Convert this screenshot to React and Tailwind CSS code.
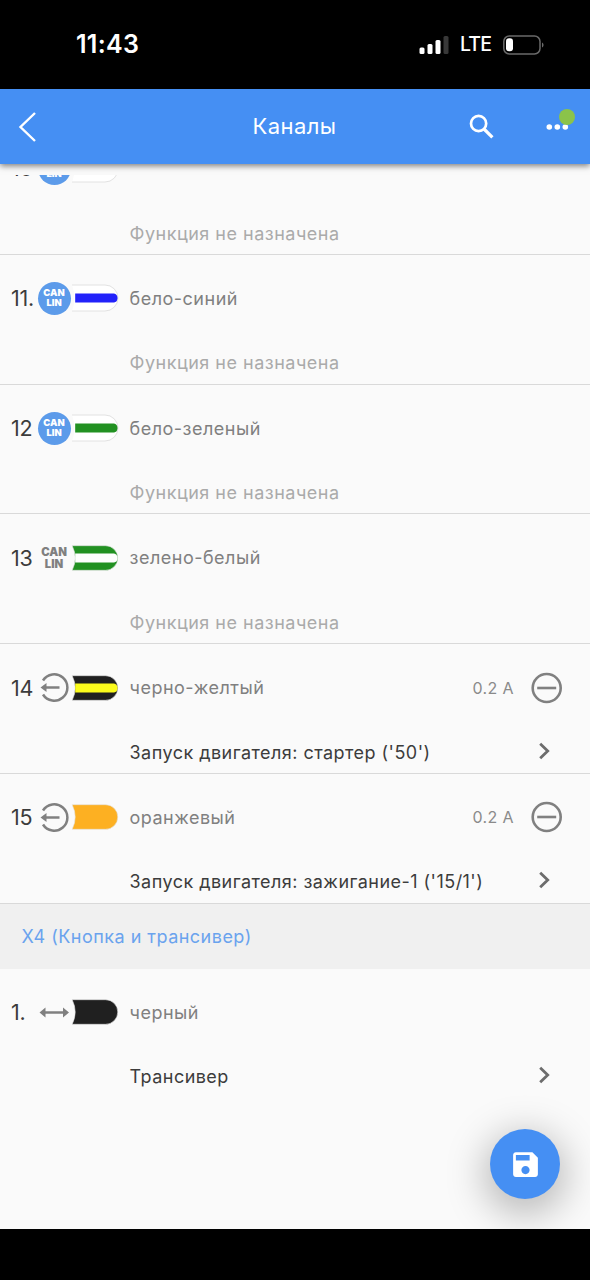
import clsx from 'clsx';

const unassigned = 'Функция не назначена';

const channels = [
    { num: '10', icon: 'can', base: '#ffffff', stripe: null, color: '', func: null },
    { num: '11.', icon: 'can', base: '#ffffff', stripe: '#2222fa', color: 'бело-синий', func: null },
    { num: '12', icon: 'can', base: '#ffffff', stripe: '#229122', color: 'бело-зеленый', func: null },
    { num: '13', icon: 'can-off', base: '#229122', stripe: '#ffffff', color: 'зелено-белый', func: null },
    { num: '14', icon: 'output', base: '#202020', stripe: '#fbfb1c', color: 'черно-желтый', current: '0.2 A', func: "Запуск двигателя: стартер ('50')" },
    { num: '15', icon: 'output', base: '#fdb022', stripe: null, color: 'оранжевый', current: '0.2 A', func: "Запуск двигателя: зажигание-1 ('15/1')" },
];

const transceiver = [
    { num: '1.', icon: 'both', base: '#202020', stripe: null, color: 'черный', func: 'Трансивер' },
];

function StatusBar() {
    return (
        <div className="flex h-[89px] shrink-0 items-center justify-between bg-black pl-[76px] pr-[46px] text-white">
            <span className="text-[25px] font-semibold leading-none tracking-[0.3px]">11:43</span>
            <div className="flex items-center">
                <svg width="30" height="18" viewBox="0 0 30 18" fill="#fff">
                    <rect x="0.5" y="11.500" width="5" height="6.500" rx="1.5" />
                    <rect x="8.5" y="8" width="5" height="10" rx="1.5" />
                    <rect x="16.5" y="4" width="5" height="14" rx="1.5" />
                    <rect x="24.5" y="0" width="5" height="18" rx="1.5" fill="#383838" />
                </svg>
                <span className="ml-[11px] text-[19.500px] font-medium leading-none tracking-[-0.9px]">LTE</span>
                <svg className="ml-[12px] -mr-px" width="42" height="20" viewBox="0 0 42 20" fill="none">
                    <rect x="0.8" y="1" width="36.200" height="18" rx="5.5" stroke="#6a6a6a" strokeWidth="1.5" />
                    <rect x="3" y="3.3" width="7" height="13" rx="3" fill="#fff" />
                    <path d="M39 7.5c2 .8 2 4.2 0 5z" fill="#6a6a6a" />
                </svg>
            </div>
        </div>
    );
}

function Header() {
    return (
        <header className="z-10 grid h-[75px] shrink-0 grid-cols-[1fr_auto_1fr] items-center bg-[#458ff3] pl-[18px] pr-[19px] text-white shadow-[0_2px_6px_rgba(0,0,0,0.5)]">
            <svg width="18" height="30" viewBox="0 0 18 30" fill="none" stroke="#fff" strokeWidth="2.4">
                <path d="M17 1 2.500 15 17 29" />
            </svg>
            <h1 className="-mt-px text-[22px] leading-none tracking-[0.4px]">Каналы</h1>
            <div className="-mr-[5px] flex items-center justify-end gap-[52px]">
                <svg width="25" height="25" viewBox="0 0 25 25" fill="none" stroke="#fff">
                    <circle cx="9.600" cy="9.500" r="7.600" strokeWidth="2.700" />
                    <path d="m15 15 8.400 8.400" strokeWidth="3.200" />
                </svg>
                <div className="relative h-6 w-[30px]">
                    <svg width="24" height="24" viewBox="0 0 24 24" fill="#fff">
                        <circle cx="3.300" cy="12" r="2.800" />
                        <circle cx="11.300" cy="12" r="2.800" />
                        <circle cx="19.300" cy="12" r="2.800" />
                    </svg>
                    <span className="absolute left-[13px] top-[-6px] size-4 rounded-full bg-[#8bc34a]" />
                </div>
            </div>
        </header>
    );
}

function ChannelIcon({ type }) {
    if (type === 'can' || type === 'can-off') {
        return (
            <div
                className={clsx(
                    'flex size-[33px] shrink-0 flex-col items-center justify-center rounded-full font-black',
                    type === 'can' ? 'bg-[#5c9bea] text-[9.400px] leading-[10.500px] text-white' : 'text-[11.300px] leading-[12px] text-[#808080]'
                )}
            >
                <span>CAN</span>
                <span>LIN</span>
            </div>
        );
    }

    return (
        <svg className="shrink-0" width="33" height="33" viewBox="0 0 33 33" fill="none" stroke="#808080" strokeWidth="2.500">
            {type === 'output' ? (
                <>
                    <path d="M5 9.500a13.200 13.200 0 1 1 0 14" />
                    <path d="M8 16.500h13.500" />
                    <path d="M2.500 16.500 8.500 11.900v9.200z" fill="#808080" stroke="none" />
                </>
            ) : (
                <>
                    <path d="M6 16.500h20" />
                    <path d="M1.500 16.500 7.500 11.500v10zM31 16.500 25 11.500v10z" fill="#808080" stroke="none" />
                </>
            )}
        </svg>
    );
}

function Wire({ base, stripe }) {
    const light = base === '#ffffff';

    return (
        <svg className="shrink-0" width="48" height="28" viewBox="0 0 48 28" fill="none">
            {light ? (
                <>
                    <path d="M1 1H34a13 13 0 0 1 0 26H1Q6 14 1 1z" fill="#fff" />
                    <path d="M1 1H34a13 13 0 0 1 0 26H1" stroke="#e2e2e2" />
                </>
            ) : (
                <path d="M1.200 1.700H34.500a12.300 12.300 0 0 1 0 24.600H1.200Q7.200 14 1.200 1.700z" fill={base} stroke="#e2e2e2" strokeWidth="0.6" />
            )}
            {stripe && <path d="M4.200 9.400H43Q46.300 10 46.600 14 46.300 18 43 18.600H4.200z" fill={stripe} />}
        </svg>
    );
}

function ChannelRow({ channel, last }) {
    const { num, icon, base, stripe, color, current, func } = channel;

    return (
        <li className={clsx('flex h-[129.800px] flex-col pt-[11px]', !last && 'border-b-[1.500px] border-[#d9d9d9]')}>
            <div className="flex h-[65px] shrink-0 items-center pr-[27px]">
                <span className="w-[37.500px] shrink-0 whitespace-nowrap pl-[11px] text-[21.500px] tracking-[-0.2px] text-[#3c3c3c]">{num}</span>
                <ChannelIcon type={icon} />
                <Wire base={base} stripe={stripe} />
                <span className="ml-[11px] flex-1 text-[18px] tracking-[0.5px] text-[#808080]">{color}</span>
                {current && (
                    <>
                        <span className="mr-[17px] text-[16px] tracking-[0.4px] text-[#8a8a8a]">{current}</span>
                        <svg width="32" height="32" viewBox="0 0 32 32" fill="none" stroke="#808080" strokeWidth="2.600">
                            <circle cx="15.700" cy="16" r="14" />
                            <path d="M6.200 16h19" />
                        </svg>
                    </>
                )}
            </div>
            <div className="flex h-[50px] shrink-0 items-center justify-between pl-[129.500px] pr-[39px] pt-[14px]">
                <span
                    className={clsx(
                        'whitespace-nowrap text-[18px]',
                        func ? 'tracking-[0.460px] text-[#3c3c3c]' : 'tracking-[0.5px] text-[#aaaaaa]'
                    )}
                >
                    {func || unassigned}
                </span>
                {func && (
                    <svg className="-mt-[3px]" width="12" height="18" viewBox="0 0 12 18" fill="none" stroke="#6c6c6c" strokeWidth="2.800">
                        <path d="m1.200 1.800 7.500 7.200-7.500 7.200" />
                    </svg>
                )}
            </div>
        </li>
    );
}

export default function App() {
    return (
        <div className="relative flex h-[1280px] w-[590px] flex-col overflow-hidden bg-[#fafafa] font-['Inter','Liberation_Sans',sans-serif]">
            <StatusBar />
            <Header />

            <main className="flex-1 pt-[11px]">
                <div className="h-[1054px] overflow-hidden">
                    <ul className="-mt-[50px]">
                        {channels.map((channel) => (
                            <ChannelRow key={channel.num} channel={channel} />
                        ))}
                    </ul>
                    <h2 className="flex h-[65px] items-center bg-[#f0f0f0] pl-[21.500px] text-[18px] tracking-[0.480px] text-[#6aa3ee]">
                        X4 (Кнопка и трансивер)
                    </h2>
                    <ul>
                        {transceiver.map((channel) => (
                            <ChannelRow key={channel.num} channel={channel} last />
                        ))}
                    </ul>
                </div>
            </main>

            <button className="absolute bottom-[81px] right-[30px] flex size-[70px] items-center justify-center rounded-full bg-[#458ff3] shadow-[0_10px_38px_6px_rgba(0,0,0,0.26)]">
                <svg width="33" height="33" viewBox="0 0 24 24" fill="#fff">
                    <path d="M17 3H5c-1.110 0-2 .9-2 2v14c0 1.100.89 2 2 2h14c1.100 0 2-.9 2-2V7l-4-4zm-5 16c-1.660 0-3-1.340-3-3s1.340-3 3-3 3 1.340 3 3-1.340 3-3 3zm3-10H5V5h10v4z" />
                </svg>
            </button>

            <footer className="z-10 h-[51px] shrink-0 bg-black" />
        </div>
    );
}
